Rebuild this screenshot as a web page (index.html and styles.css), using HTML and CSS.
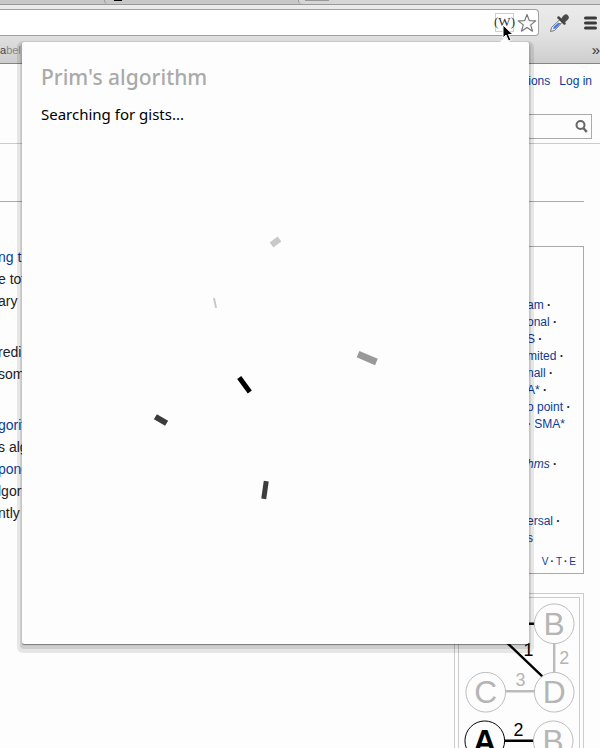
FILE: index.html
```html
<!DOCTYPE html>
<html lang="en">
<head>
<meta charset="utf-8">
<title>Prim's algorithm</title>
<link rel="stylesheet" href="styles.css">
</head>
<body>
<header class="chrome">
  <div class="tabs"><span class="tab tab-active"><i class="favicon"></i></span><span class="tab tab-back"><i class="new-tab"></i></span></div>
  <div class="toolbar">
    <div class="address">
      <input class="url" type="text" aria-label="Address">
      <button class="gist" aria-label="Search gists">(W)</button>
      <button class="icon" aria-label="Bookmark this page">
        <svg width="20" height="20" viewBox="0 0 20 20"><path d="M10 1.5l2.3 6.1 6.4.3-5 4 1.800 6.300L10 14.600l-5.500 3.600 1.800-6.300-5-4 6.400-.300z" fill="#fff" stroke="#777" stroke-width="1.2" stroke-linejoin="round"/></svg>
      </button>
    </div>
    <button class="icon" aria-label="Colour picker">
      <svg width="20" height="20" viewBox="0 0 20 20"><path d="M1.500 18.500l1-4 9-8.500 2.500 2.500-8.500 9z" fill="#e4ecf6" stroke="#777"/><path d="M4 16l1-2.500 4-3.500h3l-5.500 5.500z" fill="#3b7be0"/><path d="M9.500 4.500l6 6" stroke="#444" stroke-width="2.500" stroke-linecap="round"/><path d="M12 6l2-3q3-3 5-.500t-.500 4.500l-3.500 3z" fill="#4a4a4a"/></svg>
    </button>
    <button class="icon" aria-label="Menu">
      <svg width="13" height="14" viewBox="0 0 13 14"><path d="M1.500 2h10M1.500 7h10M1.500 12h10" stroke="#3a3a3a" stroke-width="3" stroke-linecap="round"/></svg>
    </button>
  </div>
  <nav class="bookmarks"><a href="#" class="bookmark"><b>a</b>bel</a><a href="#" class="more" aria-label="More bookmarks">»</a></nav>
</header>

<div class="page">
  <div class="masthead">
    <nav class="account"><a href="#">ions</a><a href="#">Log in</a></nav>
    <form class="search">
      <input type="search" aria-label="Search">
      <button class="icon" type="button" aria-label="Go"><svg width="13" height="13" viewBox="0 0 13 13"><circle cx="5.5" cy="5" r="4" fill="none" stroke="#666" stroke-width="2"/><path d="M8.3 8l3.5 4" stroke="#666" stroke-width="2.4"/></svg></button>
    </form>
  </div>
  <div class="heading-rule"></div>
  <div class="columns">
    <article class="article">
      <p><a href="#">ng tr</a><br>e tot<br>ary</p>
      <p>redi<br>som</p>
      <p><a href="#">gorit</a><br>s alg<br><a href="#">pone</a><br>lgor<br>ntly</p>
    </article>
    <aside class="side">
      <div class="navbox">
        <ul class="group">
          <li><a href="#">am</a> <b>·</b></li>
          <li><a href="#">onal</a> <b>·</b></li>
          <li><a href="#">S</a> <b>·</b></li>
          <li><a href="#">mited</a> <b>·</b></li>
          <li><a href="#">nall</a> <b>·</b></li>
          <li><a href="#">A*</a> <b>·</b></li>
          <li><a href="#">o point</a> <b>·</b></li>
          <li><b>·</b> <a href="#">SMA*</a></li>
        </ul>
        <ul class="group"><li><a href="#"><em>hms</em></a> <b>·</b></li></ul>
        <ul class="group group-last"><li><a href="#">ersal</a> <b>·</b></li><li><a href="#">s</a></li></ul>
        <div class="vte"><a href="#">V</a><b>·</b><a href="#">T</a><b>·</b><a href="#">E</a></div>
      </div>
      <figure class="thumb">
        <svg class="graph" viewBox="458 597 121 200" role="img" aria-label="Weighted graph">
          <g stroke-width="2.4">
            <path d="M554 643v29M505 691h29" stroke="#bbb"/>
            <path d="M505 623h29M500 636l42 40M504 741h29" stroke="#000"/>
          </g>
          <g fill="none" stroke="#bbb">
            <circle cx="554" cy="623" r="20"/><circle cx="485" cy="692" r="20"/><circle cx="554" cy="692" r="20"/><circle cx="553" cy="741" r="20"/>
            <circle cx="484" cy="741" r="20" stroke="#000"/>
          </g>
          <g class="node" fill="#b5b5b5">
            <text x="554" y="634">B</text><text x="485" y="703">C</text><text x="554" y="703">D</text><text x="553" y="752">B</text>
            <text x="484" y="752" fill="#000" font-weight="bold">A</text>
          </g>
          <g class="weight" fill="#b5b5b5">
            <text x="564" y="664">2</text><text x="520" y="686">3</text>
            <text x="528" y="655" fill="#000">1</text><text x="518" y="736" fill="#000">2</text>
          </g>
        </svg>
      </figure>
    </aside>
  </div>
</div>

<section class="popup">
  <h1>Prim's algorithm</h1>
  <p>Searching for gists...</p>
  <svg class="loader" viewBox="41 136 469 489" role="img" aria-label="Loading">
    <rect x="-5" y="-3" width="10" height="6" fill="#c8c8c8" transform="translate(275.500 242) rotate(-37)"/>
    <rect x="-1" y="-5" width="2" height="10" fill="#c8c8c8" transform="translate(215 303) rotate(-12)"/>
    <rect x="-10" y="-4" width="20" height="7" fill="#999" transform="translate(367 358.500) rotate(23)"/>
    <rect x="-9" y="-2.500" width="18" height="5" fill="#000" transform="translate(244.500 384.700) rotate(54)"/>
    <rect x="-6.500" y="-3" width="13" height="6" fill="#3c3c3c" transform="translate(161 420) rotate(30)"/>
    <rect x="-2.500" y="-9" width="5" height="18" fill="#3c3c3c" transform="translate(265 490) rotate(8)"/>
  </svg>
</section>
<svg class="cursor" width="12" height="18" viewBox="0 0 12 18" aria-hidden="true"><path d="M1 1v13l3-3 2.500 6 2.500-1-2.500-5.500H11z" fill="#000" stroke="#fff"/></svg>
</body>
</html>
```
FILE: styles.css
```css
* { box-sizing: border-box; }
body {
  position: relative;
  height: 100vh;
  margin: 0;
  overflow: hidden;
  background: #fdfdfd;
  color: #222;
  font-family: "Liberation Sans", Arial, sans-serif;
}
a { color: #0b3b98; text-decoration: none; }
ul, p, h1, figure { margin: 0; padding: 0; }
ul { list-style: none; }
button { padding: 0; border: 0; background: none; }
button svg { display: block; }
input { min-width: 0; border: 0; outline: 0; background: none; }

.chrome {
  height: 64px;
  border-bottom: 1px solid #858585;
  background: linear-gradient(#ebebeb 5px, #e4e4e4 30px, #cecece);
}
.tabs {
  display: flex;
  height: 5px;
  padding-left: 104px;
  border-bottom: 1px solid #999;
  background: #c8c8c8;
}
.tab { border-left: 1px solid #999; border-radius: 0 0 0 4px; }
.tab-active { width: 194px; padding-left: 9px; }
.tab-back { flex: 1; padding-left: 6px; background: #d6d6d6; }
.favicon { display: block; width: 8px; height: 1px; background: #000; }
.new-tab { display: block; width: 24px; height: 1px; background: #999; }
.toolbar { display: flex; align-items: center; height: 31px; padding: 4px 3px 0 0; }
.toolbar > .icon { margin-left: 10px; }
.toolbar > .icon + .icon { margin-left: 15px; }
.address {
  display: flex;
  flex: 1;
  align-items: center;
  height: 27px;
  padding-right: 1px;
  border: 1px solid #a0a0a0;
  border-left: 0;
  border-radius: 0 4px 4px 0;
  background: #fff;
}
.url { flex: 1; }
.gist {
  display: flex;
  justify-content: center;
  width: 19px;
  height: 19px;
  margin-right: 3px;
  border: 1px solid #d0d0d0;
  color: #333;
  font: 13px/16px "Liberation Serif", serif;
}
.bookmarks { display: flex; justify-content: space-between; height: 28px; font-size: 11px; line-height: 28px; }
.bookmark { color: #888; }
.bookmark b { color: #444; font-weight: 400; }
.more { color: #333; font-size: 15px; line-height: 28px; }

.masthead { height: 80px; padding: 10px 8px 0; border-bottom: 1px solid #a7d7f0; }
.account { display: flex; justify-content: flex-end; gap: 9px; font-size: 12px; line-height: 14px; }
.search {
  display: flex;
  align-items: center;
  width: 160px;
  height: 25px;
  margin: 26px 0 0 auto;
  padding-right: 3px;
  border: 1px solid #aaa;
}
.search input { flex: 1; }
.heading-rule { height: 58px; margin-right: 16px; border-bottom: 1px solid #aaa; }
.columns { display: flex; justify-content: space-between; padding: 44px 16px 0 0; }
.article { margin-left: -2px; font-size: 14px; line-height: 22px; white-space: nowrap; }
.article p { margin-bottom: 7px; }
.article p:nth-child(n + 2) { padding-top: 22px; }
.side { width: 130px; font-size: 12px; line-height: 17px; white-space: nowrap; }
.navbox { height: 328px; padding: 50px 7px 0 72px; border: 1px solid #aaa; }
.group { margin-bottom: 23px; }
.group + .group { margin-bottom: 40px; }
.group.group-last { margin-bottom: 8px; }
.vte { display: flex; justify-content: flex-end; gap: 2px; font-size: 10px; line-height: 14px; }
.thumb { margin-top: 19px; padding: 3px; border: 1px solid #ccc; }
.graph { display: block; width: 100%; border: 1px solid #ccc; }
.node { font-size: 32px; text-anchor: middle; }
.weight { font-size: 18px; text-anchor: middle; }

.popup {
  position: absolute;
  top: 42px;
  left: 22px;
  right: 71px;
  padding: 21px 19px 19px;
  border-radius: 2px;
  background: #fdfdfd;
  box-shadow: 0 1px 1px rgba(0, 0, 0, .4), 0 3px 0 2px rgba(0, 0, 0, .1), 0 4px 0 5px rgba(0, 0, 0, .09);
  color: #000;
  font-family: "Noto Sans", sans-serif;
}
.popup::before {
  content: "";
  position: absolute;
  top: -5px;
  right: 18px;
  border: 6px solid transparent;
  border-top: 0;
  border-bottom-color: #fdfdfd;
}
.popup h1 { color: #aaa; font-size: 21px; font-weight: 500; line-height: 28px; }
.popup p { margin: 13px 0 12px; font-size: 15px; line-height: 20px; }
.loader { display: block; width: 100%; }
.cursor { position: absolute; top: 24px; right: 86px; }
```
